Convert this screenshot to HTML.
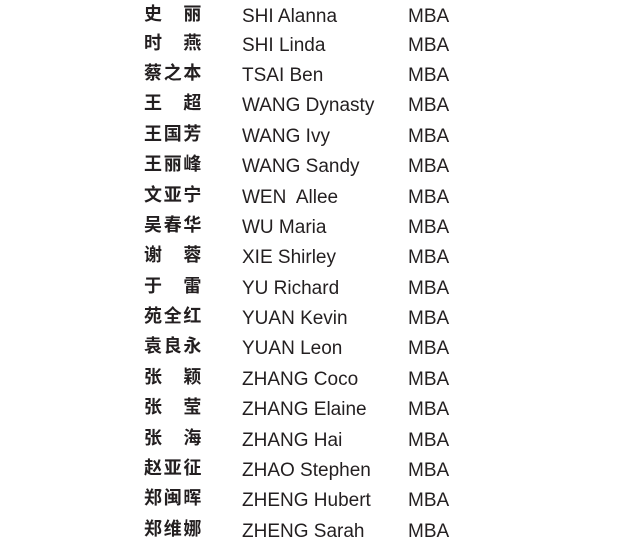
<!DOCTYPE html>
<html><head><meta charset="utf-8"><style>
html,body{margin:0;padding:0;background:#fff;width:640px;height:544px;overflow:hidden}
.r{position:absolute;left:0;height:30px;width:640px;color:#231f20}
.c{position:absolute;left:144px;top:0px;font-family:"Liberation Sans","Noto Sans CJK SC",sans-serif;font-weight:bold;font-size:18px;line-height:24px}
.c span{display:inline-block;width:19.7px}
.e{position:absolute;left:242px;top:2px;font-family:"Liberation Sans",sans-serif;font-size:19px;line-height:26px}
.m{position:absolute;left:408px;top:2px;font-family:"Liberation Sans",sans-serif;font-size:19px;line-height:26px}
</style></head><body>
<div class="r" style="top:2px"><div class="c"><span>史</span><span></span><span>丽</span></div><div class="e">SHI Alanna</div><div class="m">MBA</div></div>
<div class="r" style="top:31px"><div class="c"><span>时</span><span></span><span>燕</span></div><div class="e">SHI Linda</div><div class="m">MBA</div></div>
<div class="r" style="top:61px"><div class="c"><span>蔡</span><span>之</span><span>本</span></div><div class="e">TSAI Ben</div><div class="m">MBA</div></div>
<div class="r" style="top:91px"><div class="c"><span>王</span><span></span><span>超</span></div><div class="e">WANG Dynasty</div><div class="m">MBA</div></div>
<div class="r" style="top:122px"><div class="c"><span>王</span><span>国</span><span>芳</span></div><div class="e">WANG Ivy</div><div class="m">MBA</div></div>
<div class="r" style="top:152px"><div class="c"><span>王</span><span>丽</span><span>峰</span></div><div class="e">WANG Sandy</div><div class="m">MBA</div></div>
<div class="r" style="top:183px"><div class="c"><span>文</span><span>亚</span><span>宁</span></div><div class="e">WEN&nbsp; Allee</div><div class="m">MBA</div></div>
<div class="r" style="top:213px"><div class="c"><span>吴</span><span>春</span><span>华</span></div><div class="e">WU Maria</div><div class="m">MBA</div></div>
<div class="r" style="top:243px"><div class="c"><span>谢</span><span></span><span>蓉</span></div><div class="e">XIE Shirley</div><div class="m">MBA</div></div>
<div class="r" style="top:274px"><div class="c"><span>于</span><span></span><span>雷</span></div><div class="e">YU Richard</div><div class="m">MBA</div></div>
<div class="r" style="top:304px"><div class="c"><span>苑</span><span>全</span><span>红</span></div><div class="e">YUAN Kevin</div><div class="m">MBA</div></div>
<div class="r" style="top:334px"><div class="c"><span>袁</span><span>良</span><span>永</span></div><div class="e">YUAN Leon</div><div class="m">MBA</div></div>
<div class="r" style="top:365px"><div class="c"><span>张</span><span></span><span>颖</span></div><div class="e">ZHANG Coco</div><div class="m">MBA</div></div>
<div class="r" style="top:395px"><div class="c"><span>张</span><span></span><span>莹</span></div><div class="e">ZHANG Elaine</div><div class="m">MBA</div></div>
<div class="r" style="top:426px"><div class="c"><span>张</span><span></span><span>海</span></div><div class="e">ZHANG Hai</div><div class="m">MBA</div></div>
<div class="r" style="top:456px"><div class="c"><span>赵</span><span>亚</span><span>征</span></div><div class="e">ZHAO Stephen</div><div class="m">MBA</div></div>
<div class="r" style="top:486px"><div class="c"><span>郑</span><span>闽</span><span>晖</span></div><div class="e">ZHENG Hubert</div><div class="m">MBA</div></div>
<div class="r" style="top:517px"><div class="c"><span>郑</span><span>维</span><span>娜</span></div><div class="e">ZHENG Sarah</div><div class="m">MBA</div></div>
</body></html>
